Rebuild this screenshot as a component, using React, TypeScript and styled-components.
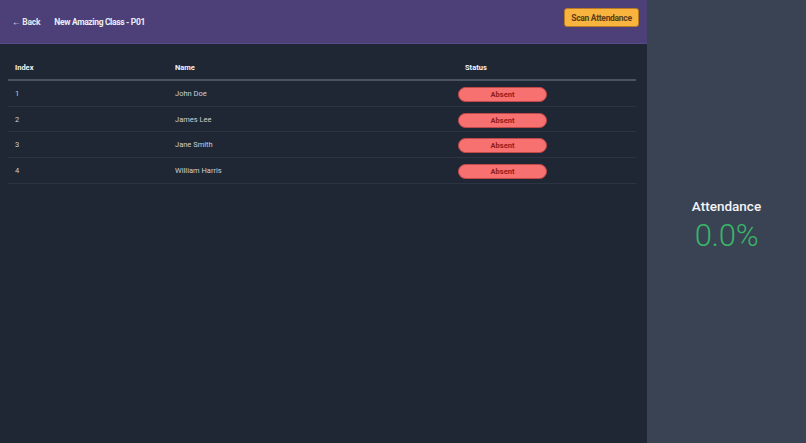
import React from "react"
import styled, { createGlobalStyle } from "styled-components"

const GlobalStyle = createGlobalStyle`
  html, body {
    margin: 0;
    padding: 0;
    height: 100%;
    background: #1f2735;
    font-family: Roboto, "Noto Sans", sans-serif;
  }
  #root {
    height: 100%;
  }
`

type Student = { index: number; name: string; present: boolean }

const students: Student[] = [
  { index: 1, name: "John Doe", present: false },
  { index: 2, name: "James Lee", present: false },
  { index: 3, name: "Jane Smith", present: false },
  { index: 4, name: "William Harris", present: false },
]

const Layout = styled.div`
  display: flex;
  height: 443px;
`

const MainColumn = styled.div`
  flex: 0 0 647px;
  display: flex;
  flex-direction: column;
  background: #1f2735;
`

const Header = styled.header`
  height: 44px;
  box-sizing: border-box;
  background: #4d3f78;
  border-bottom: 1px solid #57498a;
  display: flex;
  align-items: flex-start;
  padding: 0 8px 0 12px;
`

const HeaderLeft = styled.div`
  display: flex;
  align-items: center;
  gap: 14px;
  height: 43px;
`

const BackLink = styled.a`
  color: #e5e7eb;
  font-size: 8.5px;
  font-weight: 700;
  text-decoration: none;
  cursor: pointer;
  letter-spacing: -0.2px;
`

const ClassTitle = styled.h1`
  margin: 0;
  color: #eceef2;
  font-size: 8.5px;
  font-weight: 700;
  letter-spacing: -0.35px;
`

const ScanButton = styled.button`
  margin-left: auto;
  margin-top: 8px;
  height: 19px;
  width: 75px;
  padding: 0;
  background: #f9b440;
  color: #5b3d16;
  border: 1px solid #b87a22;
  border-radius: 3px;
  font-family: inherit;
  font-size: 8.5px;
  font-weight: 700;
  letter-spacing: -0.3px;
  cursor: pointer;
`

const TableWrap = styled.div`
  padding: 11px 11px 0 8px;
`

const Table = styled.table`
  width: 100%;
  border-collapse: collapse;
  table-layout: fixed;
`

const HeadCell = styled.th<{ $width?: number }>`
  box-sizing: border-box;
  width: ${(p) => (p.$width ? `${p.$width}px` : "auto")};
  text-align: left;
  color: #f1f3f6;
  font-size: 7.5px;
  font-weight: 700;
  padding: 0 7px;
  height: 25px;
  border-bottom: 2px solid #4b5363;
`

const Row = styled.tr`
  border-bottom: 1px solid #2c3443;
`

const Cell = styled.td`
  color: #ccd0d6;
  font-size: 7.5px;
  padding: 0 7px;
  height: 24.7px;
`

const StatusCell = styled.td`
  padding: 0;
  height: 24.7px;
`

const StatusPill = styled.span<{ $present: boolean }>`
  display: inline-flex;
  align-items: center;
  justify-content: center;
  box-sizing: border-box;
  width: 89px;
  height: 15px;
  border-radius: 8px;
  background: ${(p) => (p.$present ? "#4ade80" : "#f87171")};
  color: ${(p) => (p.$present ? "#14532d" : "#8f1d1d")};
  border: 1px solid ${(p) => (p.$present ? "#16a34a" : "#c04848")};
  font-size: 7.5px;
  font-weight: 700;
  vertical-align: middle;
`

const SidePanel = styled.aside`
  flex: 1;
  background: #3a4354;
  display: flex;
  flex-direction: column;
  align-items: center;
  justify-content: center;
  padding-top: 8px;
`

const StatLabel = styled.div`
  color: #f3f4f6;
  font-size: 13.5px;
  font-weight: 500;
`

const StatValue = styled.div`
  color: #38b468;
  font-size: 31px;
  font-weight: 300;
  line-height: 1.05;
  letter-spacing: -0.3px;
  margin-top: 6px;
`

export default function App() {
  const presentCount = students.filter((s) => s.present).length
  const rate = ((presentCount / students.length) * 100).toFixed(1)

  return (
    <>
      <GlobalStyle />
      <Layout>
        <MainColumn>
          <Header>
            <HeaderLeft>
              <BackLink>← Back</BackLink>
              <ClassTitle>New Amazing Class - P01</ClassTitle>
            </HeaderLeft>
            <ScanButton>Scan Attendance</ScanButton>
          </Header>
          <TableWrap>
            <Table>
              <thead>
                <tr>
                  <HeadCell $width={160}>Index</HeadCell>
                  <HeadCell $width={290}>Name</HeadCell>
                  <HeadCell>Status</HeadCell>
                </tr>
              </thead>
              <tbody>
                {students.map((s) => (
                  <Row key={s.index}>
                    <Cell>{s.index}</Cell>
                    <Cell>{s.name}</Cell>
                    <StatusCell>
                      <StatusPill $present={s.present}>
                        {s.present ? "Present" : "Absent"}
                      </StatusPill>
                    </StatusCell>
                  </Row>
                ))}
              </tbody>
            </Table>
          </TableWrap>
        </MainColumn>
        <SidePanel>
          <StatLabel>Attendance</StatLabel>
          <StatValue>{rate}%</StatValue>
        </SidePanel>
      </Layout>
    </>
  )
}
